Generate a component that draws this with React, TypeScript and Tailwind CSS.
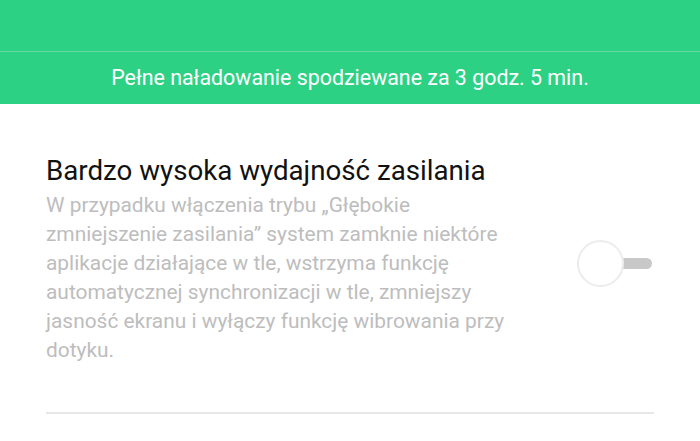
export default function App() {
  return (
    <div className="w-[700px] h-[441px] bg-white overflow-hidden font-['Roboto',sans-serif]">
      <div className="bg-[#2dd184]">
        <div className="h-[52px] border-b border-[#5fdca2]" />
        <div className="h-[52px] flex items-center justify-center text-white text-[21.4px]">
          Pełne naładowanie spodziewane za 3 godz. 5 min.
        </div>
      </div>
      <div className="px-[46px] pt-[48px]">
        <div className="flex items-center">
          <div className="flex-1">
            <h2 className="text-[27.7px] leading-[38px] text-[#111]">Bardzo wysoka wydajność zasilania</h2>
            <p className="mt-[1px] text-[20.9px] leading-[29px] text-[#bdbdbd]">
              W przypadku włączenia trybu „Głębokie
              <br />
              zmniejszenie zasilania” system zamknie niektóre
              <br />
              aplikacje działające w tle, wstrzyma funkcję
              <br />
              automatycznej synchronizacji w tle, zmniejszy
              <br />
              jasność ekranu i wyłączy funkcję wibrowania przy
              <br />
              dotyku.
            </p>
          </div>
          <div className="relative w-[76px] h-[48px] mt-[10px] mr-[1px]">
            <div className="absolute left-[40px] top-[18px] w-[35px] h-[11px] rounded-full bg-[#c8c8c8]" />
            <div className="absolute left-0 top-0 w-[47px] h-[47px] rounded-full bg-white border-2 border-[#ececec]" />
          </div>
        </div>
        <div className="mt-[47px] h-[2px] bg-[#e8e8e8]" />
      </div>
    </div>
  );
}
